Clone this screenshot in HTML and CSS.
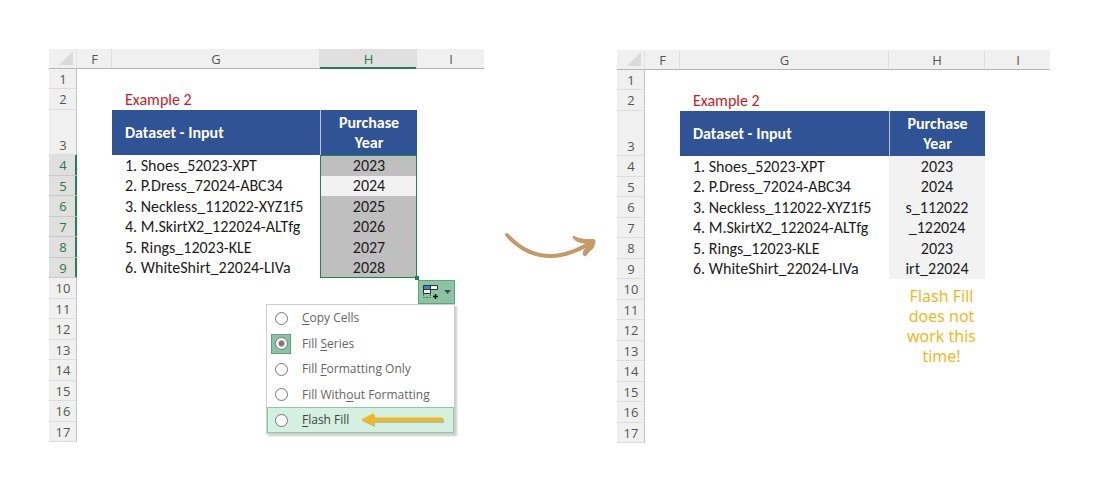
FILE: index.html
```
<!DOCTYPE html>
<html lang="en">
<head>
<meta charset="utf-8">
<title>Flash Fill example</title>
<link rel="stylesheet" href="styles.css">
</head>
<body>
<main class="comparison">
  <table class="sheet">
    <colgroup><col class="col-num"><col class="col-f"><col class="col-g"><col class="col-h"><col class="col-i"></colgroup>
    <thead>
      <tr><th class="corner"><svg width="16" height="15" viewBox="0 0 16 15" aria-hidden="true"><path d="M15 0V14H1Z" fill="#dadada"/></svg></th><th scope="col">F</th><th scope="col">G</th><th scope="col" class="active">H</th><th scope="col">I</th></tr>
    </thead>
    <tbody>
      <tr><th scope="row">1</th><td></td><td></td><td></td><td></td></tr>
      <tr><th scope="row">2</th><td></td><td class="example">Example 2</td><td></td><td></td></tr>
      <tr class="tall"><th scope="row">3</th><td></td><td class="title">Dataset - Input</td><td class="title year">Purchase Year</td><td></td></tr>
      <tr><th scope="row" class="active">4</th><td></td><td class="item">1. Shoes_52023-XPT</td><td class="value selected first">2023</td><td></td></tr>
      <tr><th scope="row" class="active">5</th><td></td><td class="item">2. P.Dress_72024-ABC34</td><td class="value selected current">2024</td><td></td></tr>
      <tr><th scope="row" class="active">6</th><td></td><td class="item">3. Neckless_112022-XYZ1f5</td><td class="value selected">2025</td><td></td></tr>
      <tr><th scope="row" class="active">7</th><td></td><td class="item">4. M.SkirtX2_122024-ALTfg</td><td class="value selected">2026</td><td></td></tr>
      <tr><th scope="row" class="active">8</th><td></td><td class="item">5. Rings_12023-KLE</td><td class="value selected">2027</td><td></td></tr>
      <tr><th scope="row" class="active">9</th><td></td><td class="item">6. WhiteShirt_22024-LIVa</td><td class="value selected last">2028
        <div class="autofill">
          <button class="autofill-button" type="button" aria-label="Auto Fill Options">
            <svg width="16" height="15" viewBox="0 0 16 15" aria-hidden="true">
              <path d="M1 1H14V5H8V9H1Z" fill="#fff"/>
              <path d="M1 1H8V5H1Z" fill="#3f7fd0"/>
              <path d="M.5 .5H14.500V4.500H7.500V8.500H.5ZM.5 4.500H8M7.500 .5V4.500" fill="none" stroke="#26352e"/>
              <path d="M.5 9V12.500H7.500V9" fill="none" stroke="#3b7d5b" stroke-dasharray="2 1"/>
              <path d="M12.500 9V14M10 11.500H15" stroke="#111" stroke-width="1.500"/>
            </svg>
            <svg width="7" height="4" viewBox="0 0 7 4" aria-hidden="true"><path d="M0 0H7L3.500 4Z" fill="#4b4b4b"/></svg>
          </button>
          <div class="menu" role="radiogroup" aria-label="Auto Fill Options">
            <label class="option"><span class="mark"><input type="radio" name="fill"></span><span><u>C</u>opy Cells</span></label>
            <label class="option"><span class="mark chosen"><input type="radio" name="fill" checked></span><span>Fill <u>S</u>eries</span></label>
            <label class="option"><span class="mark"><input type="radio" name="fill"></span><span>Fill <u>F</u>ormatting Only</span></label>
            <label class="option"><span class="mark"><input type="radio" name="fill"></span><span>Fill With<u>o</u>ut Formatting</span></label>
            <label class="option hover"><span class="mark"><input type="radio" name="fill"></span><span><u>F</u>lash Fill</span>
              <svg class="pointer" width="86" height="16" viewBox="0 0 86 16" aria-hidden="true"><path d="M2 9L15 3V7H84V11H15V15Z" fill="#9aa99b" opacity=".7"/><path d="M1 7.500L14 1V5.500H83V9.500H14V14Z" fill="#f2b824"/></svg>
            </label>
          </div>
        </div>
      </td><td></td></tr>
      <tr><th scope="row">10</th><td></td><td></td><td></td><td></td></tr>
      <tr><th scope="row">11</th><td></td><td></td><td></td><td></td></tr>
      <tr><th scope="row">12</th><td></td><td></td><td></td><td></td></tr>
      <tr><th scope="row">13</th><td></td><td></td><td></td><td></td></tr>
      <tr><th scope="row">14</th><td></td><td></td><td></td><td></td></tr>
      <tr><th scope="row">15</th><td></td><td></td><td></td><td></td></tr>
      <tr><th scope="row">16</th><td></td><td></td><td></td><td></td></tr>
      <tr><th scope="row">17</th><td></td><td></td><td></td><td></td></tr>
    </tbody>
  </table>

  <svg class="curve" width="120" height="70" viewBox="0 0 120 70" aria-hidden="true">
    <path d="M16 24C32 41 46 45 60 45C75 45 88 39 101 31" fill="none" stroke="#c49a67" stroke-width="4" stroke-linecap="round"/>
    <path d="M82 25C87 28 95 29 103 28.500C105 30 104 32 102 37C99 39 97 42 95 44.500C92 46 91 42 94 38L99 32C91 33 82 30 82 25Z" fill="#c49a67" stroke="#c49a67" stroke-linejoin="round"/>
  </svg>

  <table class="sheet result">
    <colgroup><col class="col-num"><col class="col-f"><col class="col-g"><col class="col-h"><col class="col-i"></colgroup>
    <thead>
      <tr><th class="corner"><svg width="16" height="15" viewBox="0 0 16 15" aria-hidden="true"><path d="M15 0V14H1Z" fill="#dadada"/></svg></th><th scope="col">F</th><th scope="col">G</th><th scope="col">H</th><th scope="col">I</th></tr>
    </thead>
    <tbody>
      <tr><th scope="row">1</th><td></td><td></td><td></td><td></td></tr>
      <tr><th scope="row">2</th><td></td><td class="example">Example 2</td><td></td><td></td></tr>
      <tr class="tall"><th scope="row">3</th><td></td><td class="title">Dataset - Input</td><td class="title year">Purchase Year</td><td></td></tr>
      <tr><th scope="row">4</th><td></td><td class="item">1. Shoes_52023-XPT</td><td class="value">2023</td><td></td></tr>
      <tr><th scope="row">5</th><td></td><td class="item">2. P.Dress_72024-ABC34</td><td class="value">2024</td><td></td></tr>
      <tr><th scope="row">6</th><td></td><td class="item">3. Neckless_112022-XYZ1f5</td><td class="value">s_112022</td><td></td></tr>
      <tr><th scope="row">7</th><td></td><td class="item">4. M.SkirtX2_122024-ALTfg</td><td class="value">_122024</td><td></td></tr>
      <tr><th scope="row">8</th><td></td><td class="item">5. Rings_12023-KLE</td><td class="value">2023</td><td></td></tr>
      <tr><th scope="row">9</th><td></td><td class="item">6. WhiteShirt_22024-LIVa</td><td class="value">irt_22024</td><td></td></tr>
      <tr><th scope="row">10</th><td></td><td></td><td class="note" rowspan="5">Flash Fill does not work this time!</td><td></td></tr>
      <tr><th scope="row">11</th><td></td><td></td><td></td></tr>
      <tr><th scope="row">12</th><td></td><td></td><td></td></tr>
      <tr><th scope="row">13</th><td></td><td></td><td></td></tr>
      <tr><th scope="row">14</th><td></td><td></td><td></td></tr>
      <tr><th scope="row">15</th><td></td><td></td><td></td><td></td></tr>
      <tr><th scope="row">16</th><td></td><td></td><td></td><td></td></tr>
      <tr><th scope="row">17</th><td></td><td></td><td></td><td></td></tr>
    </tbody>
  </table>
</main>
</body>
</html>
```
FILE: styles.css
```
* { box-sizing: border-box; }

body {
  margin: 0;
  background: #fff;
  color: #1c1c1c;
  font-family: Carlito, Calibri, Lato, sans-serif;
  font-size: 16px;
}

.comparison {
  display: grid;
  grid-template-columns: 435fr 133fr 433fr;
  align-items: start;
  padding: 49px 50px 49px 49px;
}

.curve { place-self: center; }

/* Spreadsheet grid */
.sheet {
  width: 100%;
  table-layout: fixed;
  border-collapse: separate;
  border-spacing: 0;
  line-height: 20px;
}
.result { margin-top: 1px; }
.col-num { width: 28px; }
.col-f { width: 35px; }
.col-h { width: 97px; }
.col-i { width: 67px; }
.result .col-h { width: 96px; }
.result .col-i { width: 65px; }

.sheet th, .sheet td { padding: 0; }
.sheet th {
  padding-left: 1px;
  background: #f0f0f0;
  color: #555;
  font-family: "Open Sans", "Noto Sans", sans-serif;
  font-size: 13px;
  font-weight: 400;
  line-height: 18px;
  text-align: center;
}
thead tr { height: 20px; }
thead th {
  border-right: 1px solid #e0e0e0;
  border-bottom: 1px solid #b5b5b5;
}
thead th:last-child { border-right: 0; }
.corner svg { display: block; margin-left: auto; margin-right: 2px; }

tbody tr { height: 20px; }
tbody tr:nth-child(even) { height: 21px; }
tbody tr.tall { height: 45px; }
tbody th {
  border-right: 1px solid #c4c4c4;
  border-bottom: 1px solid #dcdcdc;
}
.tall th { vertical-align: bottom; }

.sheet th.active { background: #e0e0e0; color: #26794d; }
thead th.active { box-shadow: inset 0 -1px #218354; border-bottom-color: #218354; }
tbody th.active {
  box-shadow: inset -1px 0 #218354;
  border-right-color: #218354;
  border-bottom-color: #c9c9c9;
}

.sheet td.example, .sheet td.item, .sheet td.title { padding-left: 13px; white-space: nowrap; }
.example { color: #c9211e; }
.title { background: #2f5395; color: #fff; font-weight: 700; }
.sheet td.year {
  padding: 2px 12px;
  border-left: 1px solid #b8c4dc;
  text-align: center;
  white-space: normal;
}

.value { background: #f2f2f2; text-align: center; }
.sheet .selected {
  padding-left: 1px;
  background: #bfbfbf;
  box-shadow: inset 1px 0 #218354, inset -1px 0 #218354;
}
.sheet .current { background: #f2f2f2; }
.sheet .first { box-shadow: inset 1px 0 #218354, inset -1px 0 #218354, inset 0 1px #218354; }
.sheet .last {
  position: relative;
  box-shadow: inset 1px 0 #218354, inset -1px 0 #218354, inset 0 -1px #218354;
}
.last::after {
  content: "";
  position: absolute;
  right: -2px;
  bottom: -2px;
  width: 4px;
  height: 4px;
  background: #218354;
}

.sheet td.note {
  padding: 7px 8px 0 17px;
  color: #f2b824;
  font-family: "Noto Sans", sans-serif;
  font-size: 16px;
  text-align: center;
  vertical-align: top;
}

/* Auto fill options */
.autofill {
  position: absolute;
  top: 22px;
  right: -38px;
  z-index: 1;
  display: flex;
  flex-direction: column;
  align-items: flex-end;
}
.autofill-button {
  display: flex;
  align-items: center;
  justify-content: space-between;
  width: 37px;
  height: 24px;
  padding: 0 3px 0 4px;
  border: 1px solid #5aa37c;
  background: #8cc3a4;
}
.menu {
  width: 189px;
  border: 1px solid #cfcfcf;
  background: #fff;
  box-shadow: 2px 2px 2px #0003;
  color: #666;
  font-family: "Open Sans", "Noto Sans", sans-serif;
  font-size: 12px;
  text-align: left;
}
.option {
  display: flex;
  align-items: center;
  height: 25px;
  padding-left: 4px;
  white-space: nowrap;
}
.option:nth-child(odd) { height: 26px; }
.option u { text-underline-offset: 2px; }
.mark {
  display: grid;
  place-items: center;
  width: 20px;
  height: 20px;
  margin-right: 11px;
}
.chosen { border: 1px solid #5aa37c; background: #8cc3a4; }
.mark input {
  appearance: none;
  width: 13px;
  height: 13px;
  margin: 0;
  border: 1px solid #777;
  border-radius: 50%;
  background: #fff;
}
.mark input:checked { background: radial-gradient(circle, #777 0 2px, #fff 4px); }
.option.hover {
  padding-left: 3px;
  border: 1px solid #8cc9a9;
  background: #d3f0e0;
  color: #444;
}
.pointer { margin-left: auto; margin-right: 7px; }
```
